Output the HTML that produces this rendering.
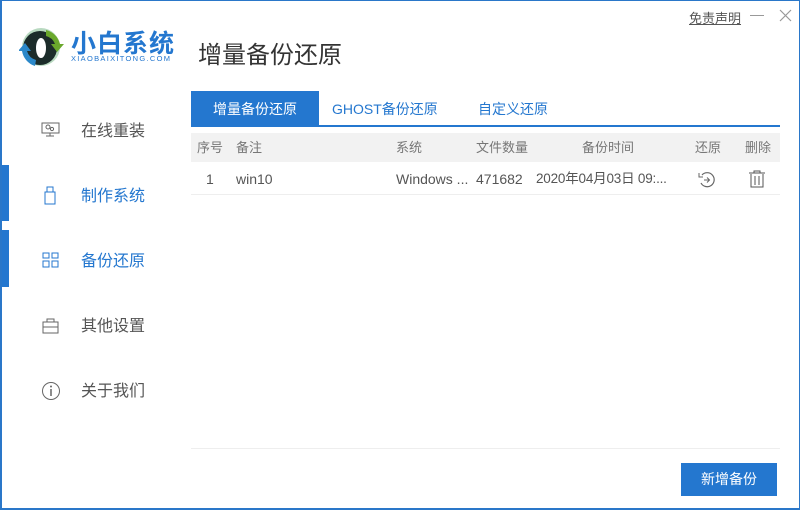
<!DOCTYPE html>
<html><head><meta charset="utf-8"><style>
*{margin:0;padding:0;box-sizing:border-box}
body{width:800px;height:510px;overflow:hidden;background:#fff;font-family:"Liberation Sans","Noto Sans CJK SC",sans-serif;position:relative}
.frame{position:absolute;left:0;top:0;width:800px;height:510px;border:1px solid #2a77c9;border-left-width:2px;border-bottom-width:2px}
.a{position:absolute;white-space:nowrap}
.nav{position:absolute;left:81px;font-size:16px;color:#555}
.bar{position:absolute;left:2px;width:7px;background:#2477cf}
.th{position:absolute;top:133px;font-size:13px;color:#777;line-height:29px}
.td{position:absolute;top:163px;font-size:14px;color:#555;line-height:32px}
</style></head><body>
<div class="frame"></div>
<svg class="a" style="left:19px;top:24px" width="46" height="44" viewBox="0 0 46 44">
<circle cx="22" cy="23" r="19" fill="#b8d9c0"/>
<circle cx="21" cy="24" r="17" fill="#1c2c2a"/>
<path d="M27 6 A19 19 0 0 1 41 20 L45 20 L38 28 L32 20 L36 20 A13 13 0 0 0 27 12Z" fill="#6aa82c"/>
<path d="M16 42 A19 19 0 0 1 3 27 L-1 27 L6 19 L12 27 L8 27 A13 13 0 0 0 17 36Z" fill="#2b88c9"/>
<ellipse cx="22" cy="24" rx="5" ry="10" fill="#fff"/>
</svg>
<div class="a" style="left:71px;top:24px;font-size:25px;font-weight:bold;color:#2477cf;letter-spacing:1px">小白系统</div>
<div class="a" style="left:71px;top:54px;font-size:7.5px;color:#2477cf;letter-spacing:1.3px">XIAOBAIXITONG.COM</div>
<div class="a" style="left:689px;top:8px;font-size:13px;color:#555;text-decoration:underline">免责声明</div>
<div class="a" style="left:750px;top:15px;width:14px;height:1px;background:#999"></div>
<svg class="a" style="left:779px;top:9px" width="13" height="13"><path d="M1 1L12 12M12 1L1 12" stroke="#999" stroke-width="1.2"/></svg>
<div class="a" style="left:198px;top:35px;font-size:24px;color:#333">增量备份还原</div>

<div class="bar" style="top:165px;height:56px"></div>
<div class="bar" style="top:230px;height:57px"></div>
<svg class="a" style="left:41px;top:122px" width="20" height="16"><rect x="1" y="1" width="17" height="10" fill="none" stroke="#666"/><circle cx="7" cy="5" r="2" fill="none" stroke="#666"/><circle cx="11" cy="7" r="1.6" fill="none" stroke="#666"/><path d="M9 11V14M5 14H13" stroke="#666"/></svg>
<div class="nav" style="top:117px">在线重装</div>
<svg class="a" style="left:44px;top:186px" width="14" height="19"><rect x="3" y="1" width="6" height="5" fill="none" stroke="#2477cf"/><rect x="1" y="6" width="10" height="12" fill="none" stroke="#2477cf"/></svg>
<div class="nav" style="top:182px;color:#2477cf">制作系统</div>
<svg class="a" style="left:42px;top:252px" width="18" height="17"><g fill="none" stroke="#2477cf"><rect x="1" y="1" width="6" height="5"/><rect x="10" y="1" width="6" height="5"/><rect x="1" y="9" width="6" height="6"/><rect x="10" y="9" width="6" height="6"/></g></svg>
<div class="nav" style="top:247px;color:#2477cf">备份还原</div>
<svg class="a" style="left:42px;top:318px" width="18" height="16"><g fill="none" stroke="#666"><rect x="1" y="4" width="15" height="11"/><path d="M5 4V1H12V4M1 9H16"/></g></svg>
<div class="nav" style="top:312px">其他设置</div>
<svg class="a" style="left:41px;top:381px" width="20" height="20"><circle cx="10" cy="10" r="8.5" fill="none" stroke="#666"/><path d="M10 8V15" stroke="#666" stroke-width="1.5"/><circle cx="10" cy="5.5" r="1" fill="#666"/></svg>
<div class="nav" style="top:377px">关于我们</div>

<div class="a" style="left:191px;top:91px;width:128px;height:35px;background:#2477cf;color:#fff;font-size:14px;line-height:36px;text-align:center">增量备份还原</div>
<div class="a" style="left:332px;top:91px;font-size:14px;color:#2477cf;line-height:36px">GHOST备份还原</div>
<div class="a" style="left:478px;top:91px;font-size:14px;color:#2477cf;line-height:36px">自定义还原</div>
<div class="a" style="left:191px;top:125px;width:589px;height:2px;background:#2477cf"></div>
<div class="a" style="left:191px;top:133px;width:589px;height:29px;background:#f2f2f2"></div>
<div class="th" style="left:197px">序号</div>
<div class="th" style="left:236px">备注</div>
<div class="th" style="left:396px">系统</div>
<div class="th" style="left:476px">文件数量</div>
<div class="th" style="left:582px">备份时间</div>
<div class="th" style="left:695px">还原</div>
<div class="th" style="left:745px">删除</div>
<div class="td" style="left:206px">1</div>
<div class="td" style="left:236px">win10</div>
<div class="td" style="left:396px">Windows ...</div>
<div class="td" style="left:476px">471682</div>
<div class="td" style="left:536px;font-size:13.5px;letter-spacing:-0.2px">2020年04月03日 09:...</div>
<svg class="a" style="left:697px;top:170px" width="20" height="19"><path d="M5 5A7 7 0 1 1 4 13" fill="none" stroke="#666" stroke-width="1.2"/><path d="M2 3V7H6" fill="none" stroke="#666"/><path d="M7 10H12M10 7.5L12.5 10L10 12.5" fill="none" stroke="#666"/></svg>
<svg class="a" style="left:748px;top:170px" width="18" height="18"><g fill="none" stroke="#555"><path d="M1 3H17M6 3V1H12V3M3 4V17H15V4M7 6V15M11 6V15"/></g></svg>
<div class="a" style="left:191px;top:194px;width:589px;height:1px;background:#eee"></div>
<div class="a" style="left:191px;top:448px;width:589px;height:1px;background:#eee"></div>
<div class="a" style="left:681px;top:463px;width:96px;height:33px;background:#2477cf;color:#fff;font-size:14px;line-height:33px;text-align:center">新增备份</div>
</body></html>
